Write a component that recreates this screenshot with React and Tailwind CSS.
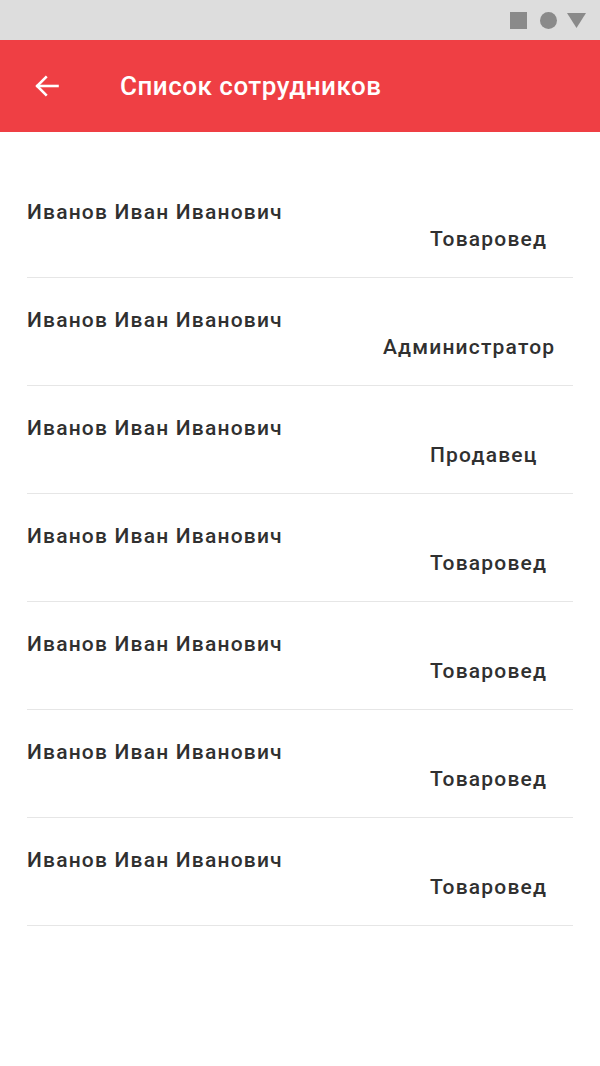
import React from 'react';

const employees = [
  { name: 'Иванов Иван Иванович', role: 'Товаровед', offset: 'ml-[403px]' },
  { name: 'Иванов Иван Иванович', role: 'Администратор', offset: 'ml-[356px]' },
  { name: 'Иванов Иван Иванович', role: 'Продавец', offset: 'ml-[403px]' },
  { name: 'Иванов Иван Иванович', role: 'Товаровед', offset: 'ml-[403px]' },
  { name: 'Иванов Иван Иванович', role: 'Товаровед', offset: 'ml-[403px]' },
  { name: 'Иванов Иван Иванович', role: 'Товаровед', offset: 'ml-[403px]' },
  { name: 'Иванов Иван Иванович', role: 'Товаровед', offset: 'ml-[403px]' },
];

const App = () => {
  return (
    <div className="w-[600px] h-[1066px] bg-white font-['Roboto','Liberation_Sans',sans-serif]">
      {/* статус-бар */}
      <div className="h-[40px] bg-[#dddddd] flex items-center justify-end pr-[14px]">
        <div className="w-[17px] h-[17px] bg-[#8a8a8a]" />
        <div className="ml-[13px] w-[17px] h-[17px] rounded-full bg-[#8a8a8a]" />
        <svg className="ml-[10px]" width="19" height="15" viewBox="0 0 19 15">
          <polygon points="0,0 19,0 9.5,15" fill="#8a8a8a" />
        </svg>
      </div>

      {/* шапка */}
      <div className="h-[92px] bg-[#ef3f44] flex items-center">
        <svg className="ml-[33px]" width="28" height="28" viewBox="0 0 24 24" fill="none" stroke="white" strokeWidth="2.2" strokeLinecap="square">
          <path d="M21 12H4" />
          <path d="M11 4.5L3.5 12L11 19.5" />
        </svg>
        <h1 className="ml-[59px] text-white text-[26px] font-medium leading-none tracking-[0.5px]">
          Список сотрудников
        </h1>
      </div>

      {/* список */}
      <div className="pt-[38px] px-[27px]">
        {employees.map((e, i) => (
          <div key={i} className="pt-[30px] pb-[26px] border-b border-[#e6e6e6]">
            <div className="text-[21px] leading-[24px] font-medium tracking-[1.2px] text-[#303030]">{e.name}</div>
            <div className={`mt-[3px] text-[21px] leading-[24px] font-medium tracking-[1.2px] text-[#303030] ${e.offset}`}>{e.role}</div>
          </div>
        ))}
      </div>
    </div>
  );
};

export default App;
